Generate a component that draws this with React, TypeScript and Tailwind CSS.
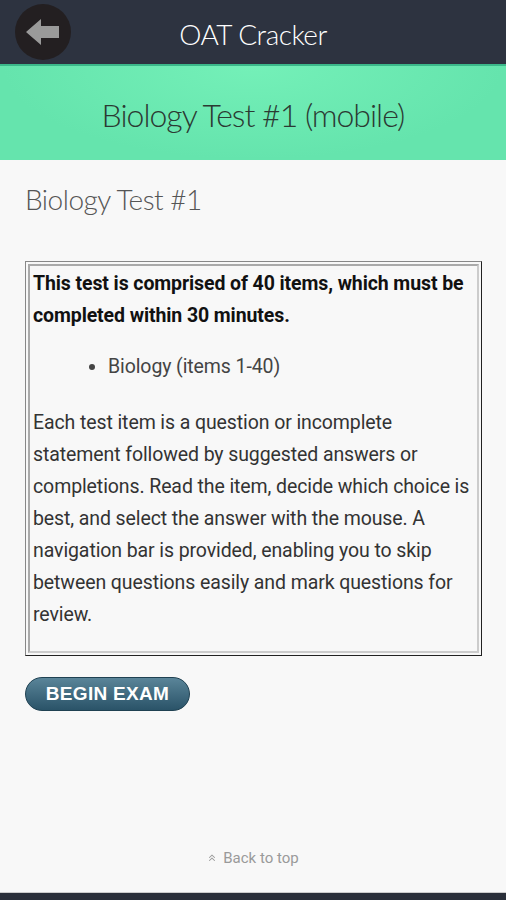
import { HiChevronDoubleUp } from "react-icons/hi";

function BackButton() {
    return (
        <div className="w-[56px] h-[56px] rounded-full bg-[#231f21] flex items-center justify-center">
            <svg width="38" height="30" viewBox="0 0 38 30">
                <path d="M2 15 L17 2 L17 9 L35 9 L35 21 L17 21 L17 28 Z" fill="#9a9a9a" />
            </svg>
        </div>
    );
}

export default function App() {
    return (
        <div className="w-[506px] h-[900px] bg-[#f8f8f8] flex flex-col font-['Roboto',sans-serif]">
            <div className="h-[66px] bg-[#2d3340] relative flex items-center justify-center border-b-2 border-[#3bb88a]">
                <div className="absolute left-[15px] top-[4px]">
                    <BackButton />
                </div>
                <span className="font-['Lato',sans-serif] font-light text-[28px] text-white tracking-[-0.5px] mt-[3px]">OAT Cracker</span>
            </div>
            <div className="h-[94px] bg-[radial-gradient(ellipse_at_50%_0%,#74f0b8_0%,#65e4ad_70%)] flex items-center justify-center">
                <span className="font-['Lato',sans-serif] font-light text-[32px] text-[#2b3a33] tracking-[-1px] mt-[3px]">Biology Test #1 (mobile)</span>
            </div>
            <div className="flex-1 flex flex-col px-[25px]">
                <h1 className="font-['Lato',sans-serif] font-light text-[28px] text-[#555] mt-[18px] tracking-[-0.5px]">Biology Test #1</h1>
                <div className="mt-[41px] w-[457px] border border-t-[#888] border-l-[#888] border-b-[#222] border-r-[#222] p-[2px]">
                    <div className="border-2 border-t-[#aaa] border-l-[#aaa] border-b-[#ccc] border-r-[#ccc] px-[3px] pt-[2px] pb-[20px] text-[19.5px] leading-[32px] text-[#333] tracking-[-0.1px]">
                        <p className="font-bold text-[#111]">This test is comprised of 40 items, which must be completed within 30 minutes.</p>
                        <ul className="list-disc pl-[75px] mt-[19px] text-[#444]">
                            <li>Biology (items 1-40)</li>
                        </ul>
                        <p className="mt-[24px]">Each test item is a question or incomplete statement followed by suggested answers or completions. Read the item, decide which choice is best, and select the answer with the mouse. A navigation bar is provided, enabling you to skip between questions easily and mark questions for review.</p>
                    </div>
                </div>
                <button className="mt-[21px] w-[165px] h-[34px] rounded-full bg-gradient-to-b from-[#5a8599] to-[#2a5368] border border-[#1f4152] text-white font-['Liberation_Sans',sans-serif] font-bold text-[19px] tracking-[0.3px]">BEGIN EXAM</button>
                <div className="flex-1" />
                <div className="flex items-center justify-center gap-[6px] text-[#9a9a9a] text-[15px] mb-[23px]">
                    <HiChevronDoubleUp className="w-[10px] h-[10px]" />
                    <span>Back to top</span>
                </div>
            </div>
            <div className="h-[8px] bg-[#2a2f3a] border-t border-[#ccc]" />
        </div>
    );
}
